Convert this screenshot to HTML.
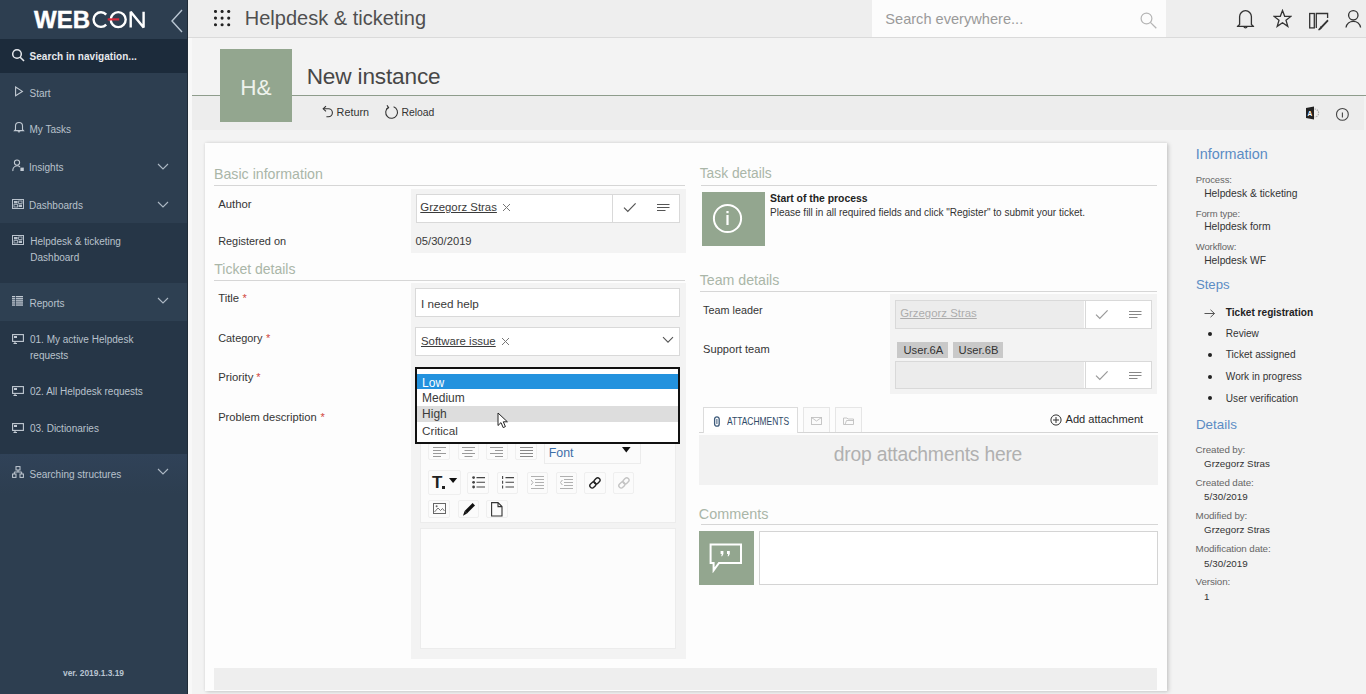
<!DOCTYPE html>
<html><head><meta charset="utf-8"><title>WEBCON</title>
<style>
html,body{margin:0;padding:0;width:1366px;height:694px;overflow:hidden;background:#f3f3f3;}
body{position:relative;font-family:"Liberation Sans",sans-serif;}
.t{position:absolute;white-space:nowrap;line-height:1;}
.r{position:absolute;box-sizing:border-box;}
.u{text-decoration:underline;}
</style></head><body>
<div class="r" style="left:0px;top:0px;width:188px;height:694px;background:#2d3e50;"></div>
<svg class="r" style="left:30px;top:6px;" width="120" height="28" viewBox="0 0 120 28">
<text x="4" y="21.6" font-family="Liberation Sans" font-weight="700" font-size="23" fill="#fff" stroke="#fff" stroke-width="0.4" textLength="56" lengthAdjust="spacingAndGlyphs">WEB</text>
<path d="M76.2 8.6 A7.3 7.3 0 1 0 76.2 18.6" fill="none" stroke="#fff" stroke-width="2.4"/>
<circle cx="88.2" cy="13.6" r="7.5" fill="none" stroke="#fff" stroke-width="2.4"/>
<line x1="77.7" y1="13.4" x2="89.2" y2="13.4" stroke="#d8283a" stroke-width="2.2"/>
<path d="M100.7 21.5 V5.7 L113.6 21.5 V5.7" fill="none" stroke="#fff" stroke-width="2.4" stroke-linejoin="bevel"/>
</svg>
<svg class="r" style="left:168px;top:8px;" width="18" height="26" viewBox="0 0 18 26"><path d="M14 2 L4 13 L14 24" fill="none" stroke="#b9c6d3" stroke-width="1.4"/></svg>
<div class="r" style="left:0px;top:39px;width:188px;height:34px;background:#1c2b3b;"></div>
<svg class="r" style="left:11px;top:48px;" width="16" height="15" viewBox="0 0 16 15"><circle cx="6" cy="6" r="4.3" fill="none" stroke="#e6e9ee" stroke-width="1.5"/><line x1="9.2" y1="9.2" x2="13" y2="13" stroke="#e6e9ee" stroke-width="1.6"/></svg>
<div class="t " style="left:29.5px;top:52.4px;font-size:10px;color:#e6e9ed;font-weight:700;letter-spacing:0.05px;">Search in navigation...</div>
<div class="t " style="left:29.5px;top:89.1px;font-size:10px;color:#b9c2cc;">Start</div>
<svg class="r" style="left:14px;top:86px;" width="10" height="12" viewBox="0 0 10 12"><path d="M1.6 1 L8.4 5.4 L1.6 9.8 Z" fill="none" stroke="#c3cbd4" stroke-width="1.1"/></svg>
<div class="t " style="left:29.5px;top:125.1px;font-size:10px;color:#b9c2cc;">My Tasks</div>
<svg class="r" style="left:13px;top:121px;" width="12" height="13" viewBox="0 0 12 13"><path d="M2.5 8.5 V5 A3.5 3.5 0 0 1 9.5 5 V8.5 L10.5 9.6 H1.5 Z M5 10.5 A1.2 1.2 0 0 0 7 10.5" fill="none" stroke="#c3cbd4" stroke-width="1.1"/></svg>
<div class="t " style="left:29.0px;top:163.1px;font-size:10px;color:#b9c2cc;">Insights</div>
<svg class="r" style="left:12px;top:159px;" width="14" height="14" viewBox="0 0 14 14"><circle cx="5" cy="3.6" r="2.6" fill="none" stroke="#c3cbd4" stroke-width="1.1"/><path d="M1 12 A4.2 4.2 0 0 1 8 8" fill="none" stroke="#c3cbd4" stroke-width="1.1"/><rect x="8.4" y="8.6" width="3.4" height="3.4" fill="#c3cbd4"/></svg>
<div class="t " style="left:29.0px;top:201.1px;font-size:10px;color:#b9c2cc;">Dashboards</div>
<svg class="r" style="left:12px;top:199px;" width="12" height="10" viewBox="0 0 12 10"><rect x="0.5" y="0.5" width="11" height="9" fill="none" stroke="#b9c2cc" stroke-width="1"/><rect x="2" y="2" width="3.6" height="2.4" fill="#b9c2cc"/><rect x="6.6" y="2" width="3.4" height="2.4" fill="none" stroke="#b9c2cc" stroke-width="0.8"/><rect x="2" y="5.6" width="3.6" height="2.4" fill="none" stroke="#b9c2cc" stroke-width="0.8"/><rect x="6.6" y="5.6" width="3.4" height="2.4" fill="#b9c2cc"/></svg>
<div class="r" style="left:0px;top:223px;width:188px;height:60px;background:#263647;"></div>
<div class="t " style="left:30.3px;top:236.5px;font-size:10px;color:#b9c2cc;">Helpdesk &amp; ticketing</div>
<div class="t " style="left:30.3px;top:252.8px;font-size:10px;color:#b9c2cc;">Dashboard</div>
<svg class="r" style="left:12px;top:235px;" width="12" height="10" viewBox="0 0 12 10"><rect x="0.5" y="0.5" width="11" height="9" fill="none" stroke="#b9c2cc" stroke-width="1"/><rect x="2" y="2" width="3.6" height="2.4" fill="#b9c2cc"/><rect x="6.6" y="2" width="3.4" height="2.4" fill="none" stroke="#b9c2cc" stroke-width="0.8"/><rect x="2" y="5.6" width="3.6" height="2.4" fill="none" stroke="#b9c2cc" stroke-width="0.8"/><rect x="6.6" y="5.6" width="3.4" height="2.4" fill="#b9c2cc"/></svg>
<div class="r" style="left:0px;top:283px;width:188px;height:38px;background:#2e4052;"></div>
<div class="t " style="left:29.5px;top:298.7px;font-size:10px;color:#b9c2cc;">Reports</div>
<svg class="r" style="left:12px;top:296px;" width="12" height="11" viewBox="0 0 12 11"><rect x="0" y="0.0" width="11" height="1.3" fill="#c3cbd4"/><rect x="0" y="2.1" width="11" height="1.3" fill="#c3cbd4"/><rect x="0" y="4.2" width="11" height="1.3" fill="#c3cbd4"/><rect x="0" y="6.3" width="11" height="1.3" fill="#c3cbd4"/><rect x="0" y="8.4" width="11" height="1.3" fill="#c3cbd4"/><line x1="3.5" y1="0" x2="3.5" y2="10" stroke="#2f4155" stroke-width="0.8"/></svg>
<div class="r" style="left:0px;top:321px;width:188px;height:133px;background:#263647;"></div>
<div class="t " style="left:30.0px;top:334.9px;font-size:10px;color:#b9c2cc;">01. My active Helpdesk</div>
<div class="t " style="left:30.0px;top:351.0px;font-size:10px;color:#b9c2cc;">requests</div>
<svg class="r" style="left:12px;top:334px;" width="12" height="10" viewBox="0 0 12 10"><rect x="0.6" y="0.6" width="10.8" height="6.8" fill="none" stroke="#c3cbd4" stroke-width="1.1"/><path d="M3 7.4 V9.6 M1.5 9.6 H5" stroke="#c3cbd4" stroke-width="1.1"/><rect x="2" y="2" width="3" height="2" fill="#c3cbd4"/></svg>
<div class="t " style="left:30.0px;top:386.8px;font-size:10px;color:#b9c2cc;">02. All Helpdesk requests</div>
<svg class="r" style="left:12px;top:386px;" width="12" height="10" viewBox="0 0 12 10"><rect x="0.6" y="0.6" width="10.8" height="6.8" fill="none" stroke="#c3cbd4" stroke-width="1.1"/><path d="M3 7.4 V9.6 M1.5 9.6 H5" stroke="#c3cbd4" stroke-width="1.1"/><rect x="2" y="2" width="3" height="2" fill="#c3cbd4"/></svg>
<div class="t " style="left:30.0px;top:423.7px;font-size:10px;color:#b9c2cc;">03. Dictionaries</div>
<svg class="r" style="left:12px;top:423px;" width="12" height="10" viewBox="0 0 12 10"><rect x="0.6" y="0.6" width="10.8" height="6.8" fill="none" stroke="#c3cbd4" stroke-width="1.1"/><path d="M3 7.4 V9.6 M1.5 9.6 H5" stroke="#c3cbd4" stroke-width="1.1"/><rect x="2" y="2" width="3" height="2" fill="#c3cbd4"/></svg>
<div class="r" style="left:0px;top:454px;width:188px;height:40px;background:linear-gradient(#304258,#2d3e50);"></div>
<div class="t " style="left:29.5px;top:469.5px;font-size:10px;color:#b9c2cc;">Searching structures</div>
<svg class="r" style="left:12px;top:466px;" width="12" height="12" viewBox="0 0 12 12"><rect x="4" y="0.6" width="4" height="3.4" fill="none" stroke="#c3cbd4" stroke-width="1"/><rect x="0.6" y="8" width="3.4" height="3.4" fill="none" stroke="#c3cbd4" stroke-width="1"/><rect x="8" y="8" width="3.4" height="3.4" fill="none" stroke="#c3cbd4" stroke-width="1"/><path d="M6 4 V6 M2.3 8 V6 H9.7 V8" fill="none" stroke="#c3cbd4" stroke-width="1"/></svg>
<svg class="r" style="left:157px;top:163px;" width="12" height="8" viewBox="0 0 12 8"><path d="M1 1 L6 6 L11 1" fill="none" stroke="#aeb9c5" stroke-width="1.1"/></svg>
<svg class="r" style="left:157px;top:201px;" width="12" height="8" viewBox="0 0 12 8"><path d="M1 1 L6 6 L11 1" fill="none" stroke="#aeb9c5" stroke-width="1.1"/></svg>
<svg class="r" style="left:157px;top:297px;" width="12" height="8" viewBox="0 0 12 8"><path d="M1 1 L6 6 L11 1" fill="none" stroke="#aeb9c5" stroke-width="1.1"/></svg>
<svg class="r" style="left:157px;top:468px;" width="12" height="8" viewBox="0 0 12 8"><path d="M1 1 L6 6 L11 1" fill="none" stroke="#aeb9c5" stroke-width="1.1"/></svg>
<div class="r" style="left:186.5px;top:0px;width:1.5px;height:694px;background:#1f2b37;"></div>
<div class="t " style="left:63.0px;top:668.8px;font-size:8.4px;color:#b9c4d0;font-weight:700;">ver. 2019.1.3.19</div>
<div class="r" style="left:188px;top:0px;width:1178px;height:37px;background:#eeeeee;"></div>
<div class="r" style="left:188px;top:37px;width:1178px;height:1px;background:#dadada;"></div>
<svg class="r" style="left:214px;top:10px;" width="17" height="17" viewBox="0 0 17 17"><circle cx="1.5" cy="1.5" r="1.55" fill="#222"/><circle cx="1.5" cy="8.1" r="1.55" fill="#222"/><circle cx="1.5" cy="14.7" r="1.55" fill="#222"/><circle cx="8.1" cy="1.5" r="1.55" fill="#222"/><circle cx="8.1" cy="8.1" r="1.55" fill="#222"/><circle cx="8.1" cy="14.7" r="1.55" fill="#222"/><circle cx="14.7" cy="1.5" r="1.55" fill="#222"/><circle cx="14.7" cy="8.1" r="1.55" fill="#222"/><circle cx="14.7" cy="14.7" r="1.55" fill="#222"/></svg>
<div class="t " style="left:244.8px;top:8.4px;font-size:20px;color:#505050;">Helpdesk &amp; ticketing</div>
<div class="r" style="left:872px;top:0px;width:294px;height:37px;background:#fcfcfc;"></div>
<div class="t " style="left:885.3px;top:12.2px;font-size:14.6px;color:#9a9a9a;">Search everywhere...</div>
<svg class="r" style="left:1140px;top:12px;" width="18" height="17" viewBox="0 0 18 17"><circle cx="6.5" cy="6.5" r="5.4" fill="none" stroke="#b5b5b5" stroke-width="1.2"/><line x1="10.4" y1="10.4" x2="16.3" y2="16.2" stroke="#b5b5b5" stroke-width="1.3"/></svg>
<svg class="r" style="left:1236px;top:8px;" width="19" height="21" viewBox="0 0 19 21"><path d="M3.6 16.6 V8.6 A5.9 5.9 0 0 1 15.4 8.6 V16.6 L17.6 18.4 H1.4 Z" fill="none" stroke="#333" stroke-width="1.3" stroke-linejoin="round"/><path d="M7.8 18.6 A1.8 1.8 0 0 0 11.2 18.6" fill="none" stroke="#333" stroke-width="1.2"/></svg>
<svg class="r" style="left:1273px;top:9px;" width="19" height="20" viewBox="0 0 19 20"><path d="M9.5 1.5 L11.7 7.3 L17.9 7.4 L13 11.2 L14.8 17.4 L9.5 13.8 L4.2 17.4 L6 11.2 L1.1 7.4 L7.3 7.3 Z" fill="none" stroke="#333" stroke-width="1.3" stroke-linejoin="miter"/></svg>
<svg class="r" style="left:1308px;top:12px;" width="22" height="19" viewBox="0 0 22 19"><rect x="1.7" y="1.5" width="4.6" height="14.4" fill="none" stroke="#333" stroke-width="1.3"/><path d="M8.3 15.9 V1.5 H19.6 V6" fill="none" stroke="#333" stroke-width="1.3"/><path d="M19.4 8.4 L11.6 16.6 L10.6 18 L12 17.2 L19.8 9 Z" fill="none" stroke="#333" stroke-width="1.2"/><line x1="12.2" y1="14.6" x2="13.8" y2="16.2" stroke="#333" stroke-width="1"/></svg>
<svg class="r" style="left:1345px;top:9px;" width="18" height="20" viewBox="0 0 18 20"><circle cx="8.3" cy="6.3" r="4.7" fill="none" stroke="#333" stroke-width="1.3"/><path d="M1 18.5 A7.4 7.4 0 0 1 15.6 18.5" fill="none" stroke="#333" stroke-width="1.3"/></svg>
<div class="r" style="left:192px;top:38px;width:1172px;height:58px;background:#f3f3f3;"></div>
<div class="r" style="left:192px;top:96px;width:1172px;height:34px;background:#ededed;"></div>
<div class="r" style="left:192px;top:94.6px;width:1174px;height:1.8px;background:#8e9c8c;"></div>
<div class="r" style="left:220px;top:49px;width:72px;height:73px;background:#93a68f;"></div>
<div class="t " style="left:240.2px;top:76.7px;font-size:22.6px;color:#eef2ec;">H&amp;</div>
<div class="t " style="left:306.7px;top:66.3px;font-size:22.6px;color:#474747;letter-spacing:-0.15px;">New instance</div>
<svg class="r" style="left:321px;top:105px;" width="13" height="14" viewBox="0 0 13 14"><path d="M2.6 3.8 H7.4 A4 4 0 0 1 7.4 11.8 H5.4" fill="none" stroke="#333" stroke-width="1.1"/><path d="M5 1.2 L2.2 3.8 L5 6.4" fill="none" stroke="#333" stroke-width="1.1"/></svg>
<div class="t " style="left:336.6px;top:107.4px;font-size:10.8px;color:#333;letter-spacing:0.0px;">Return</div>
<svg class="r" style="left:384px;top:104px;" width="15" height="16" viewBox="0 0 15 16"><path d="M4.4 3.4 A5.9 5.9 0 1 0 9.6 2.8" fill="none" stroke="#333" stroke-width="1.1"/><path d="M3 1.2 L4.6 3.6 L2.4 5.2" fill="none" stroke="#333" stroke-width="1.1"/></svg>
<div class="t " style="left:401.4px;top:107.7px;font-size:10.4px;color:#333;">Reload</div>
<svg class="r" style="left:1305px;top:106px;" width="16" height="14" viewBox="0 0 16 14"><path d="M1 2 L9 0.6 V13.4 L1 12 Z" fill="#222"/><text x="2.6" y="9.6" font-family="Liberation Sans" font-weight="700" font-size="6.5" fill="#fff">A</text><path d="M9.6 3 A4 4 0 0 1 9.6 11" fill="none" stroke="#aaa" stroke-width="1.2" stroke-dasharray="1.4 0.9"/></svg>
<svg class="r" style="left:1335px;top:107px;" width="15" height="15" viewBox="0 0 15 15"><circle cx="7.4" cy="7.4" r="5.9" fill="none" stroke="#444" stroke-width="1.1"/><line x1="7.4" y1="5.6" x2="7.4" y2="10.6" stroke="#444" stroke-width="1.1"/></svg>
<div class="r" style="left:188px;top:38px;width:4px;height:656px;background:#f8f8f8;"></div>
<div class="r" style="left:204.5px;top:143.4px;width:962px;height:547.6px;background:#fdfdfd;box-shadow:0 0 3px rgba(0,0,0,0.10),2px 1px 4px rgba(0,0,0,0.14);"></div>
<div class="t " style="left:214.0px;top:166.8px;font-size:14.2px;color:#aab6a8;">Basic information</div>
<div class="r" style="left:214px;top:185px;width:471px;height:1px;background:#d6d6d6;"></div>
<div class="t " style="left:218.2px;top:198.8px;font-size:11.3px;color:#353535;">Author</div>
<div class="t " style="left:218.2px;top:235.8px;font-size:10.9px;color:#353535;">Registered on</div>
<div class="r" style="left:410.5px;top:189px;width:275px;height:63.5px;background:#f3f3f3;"></div>
<div class="r" style="left:415.5px;top:194px;width:264.5px;height:28.6px;background:#fff;border:1px solid #d9d9d9;"></div>
<div class="r" style="left:612px;top:194px;width:1px;height:28.6px;background:#d9d9d9;"></div>
<div class="t u" style="left:420.3px;top:202.3px;font-size:11.4px;color:#3a3a3a;">Grzegorz Stras</div>
<svg class="r" style="left:501.5px;top:203px;" width="9" height="9" viewBox="0 0 9 9"><path d="M1 1 L8 8 M8 1 L1 8" stroke="#777" stroke-width="1"/></svg>
<svg class="r" style="left:623px;top:202px;" width="14" height="11" viewBox="0 0 14 11"><path d="M1 5.6 L4.8 9.4 L12.6 1.4" fill="none" stroke="#555" stroke-width="1.2"/></svg>
<svg class="r" style="left:657px;top:203px;" width="13" height="9" viewBox="0 0 13 9"><path d="M0 1.5 H12.5 M0 4.5 H12.5 M0 7.5 H8.5" fill="none" stroke="#555" stroke-width="1.1"/></svg>
<div class="t " style="left:415.6px;top:235.5px;font-size:11.2px;color:#3a3a3a;">05/30/2019</div>
<div class="t " style="left:214.3px;top:262.3px;font-size:14px;color:#aab6a8;">Ticket details</div>
<div class="r" style="left:214px;top:279.5px;width:471px;height:1px;background:#d6d6d6;"></div>
<div class="t " style="left:218.2px;top:292.9px;font-size:11.3px;color:#353535;">Title</div>
<div class="t " style="left:218.2px;top:333.3px;font-size:10.9px;color:#353535;">Category</div>
<div class="t " style="left:218.2px;top:372.1px;font-size:11.3px;color:#353535;">Priority</div>
<div class="t " style="left:218.2px;top:411.5px;font-size:11.15px;color:#353535;">Problem description</div>
<div class="t " style="left:242.6px;top:293.2px;font-size:11px;color:#d0453e;">*</div>
<div class="t " style="left:266.0px;top:333.2px;font-size:11px;color:#d0453e;">*</div>
<div class="t " style="left:256.2px;top:372.4px;font-size:11px;color:#d0453e;">*</div>
<div class="t " style="left:320.4px;top:411.6px;font-size:11px;color:#d0453e;">*</div>
<div class="r" style="left:410.5px;top:283px;width:275px;height:376px;background:#f3f3f3;"></div>
<div class="r" style="left:415.3px;top:288px;width:264.5px;height:28.7px;background:#fff;border:1px solid #d9d9d9;"></div>
<div class="t " style="left:421.0px;top:297.8px;font-size:11.7px;color:#3a3a3a;">I need help</div>
<div class="r" style="left:415.3px;top:327.3px;width:264.5px;height:28.6px;background:#fff;border:1px solid #d9d9d9;"></div>
<div class="t u" style="left:421.0px;top:335.8px;font-size:11.4px;color:#3a3a3a;">Software issue</div>
<svg class="r" style="left:500.5px;top:337px;" width="9" height="9" viewBox="0 0 9 9"><path d="M1 1 L8 8 M8 1 L1 8" stroke="#777" stroke-width="1"/></svg>
<svg class="r" style="left:662px;top:336px;" width="12" height="8" viewBox="0 0 12 8"><path d="M1 1.2 L6 6.2 L11 1.2" fill="none" stroke="#555" stroke-width="1.1"/></svg>
<div class="r" style="left:419.6px;top:443px;width:256.2px;height:80.2px;background:#fbfbfb;border:1px solid #ececec;"></div>
<div class="r" style="left:419.6px;top:528.4px;width:256.2px;height:120.6px;background:#fcfcfc;border:1px solid #ececec;"></div>
<div class="r" style="left:428.4px;top:443px;width:21.5px;height:17.3px;background:#fbfbfb;border:1px solid #efefef;border-radius:2px;"></div>
<svg class="r" style="left:432.59999999999997px;top:447px;" width="13" height="10" viewBox="0 0 13 10"><path d="M0 0.5 H13 M0 3.5 H8 M0 6.5 H13 M0 9.5 H8" stroke="#999" stroke-width="1"/></svg>
<div class="r" style="left:457.5px;top:443px;width:21.5px;height:17.3px;background:#fbfbfb;border:1px solid #efefef;border-radius:2px;"></div>
<svg class="r" style="left:461.7px;top:447px;" width="13" height="10" viewBox="0 0 13 10"><path d="M0 0.5 H13 M2.5 3.5 H10.5 M0 6.5 H13 M2.5 9.5 H10.5" stroke="#999" stroke-width="1"/></svg>
<div class="r" style="left:486px;top:443px;width:21.5px;height:17.3px;background:#fbfbfb;border:1px solid #efefef;border-radius:2px;"></div>
<svg class="r" style="left:490.2px;top:447px;" width="13" height="10" viewBox="0 0 13 10"><path d="M0 0.5 H13 M5 3.5 H13 M0 6.5 H13 M5 9.5 H13" stroke="#999" stroke-width="1"/></svg>
<div class="r" style="left:515.3px;top:443px;width:21.5px;height:17.3px;background:#fbfbfb;border:1px solid #efefef;border-radius:2px;"></div>
<svg class="r" style="left:519.5px;top:447px;" width="13" height="10" viewBox="0 0 13 10"><path d="M0 0.5 H13 M0 3.5 H13 M0 6.5 H13 M0 9.5 H13" stroke="#888" stroke-width="1"/></svg>
<div class="r" style="left:543.8px;top:443px;width:97.2px;height:21.2px;background:#fbfbfb;border:1px solid #ececec;"></div>
<div class="t " style="left:548.7px;top:446.5px;font-size:12.4px;color:#3e6fa8;">Font</div>
<svg class="r" style="left:622px;top:447px;" width="9" height="6" viewBox="0 0 9 6"><path d="M0 0 H8.6 L4.3 5.4 Z" fill="#111"/></svg>
<div class="r" style="left:427.7px;top:470px;width:33.1px;height:25px;background:#fbfbfb;border:1px solid #efefef;border-radius:2px;"></div>
<div class="t " style="left:432.0px;top:474.2px;font-size:17px;color:#222;font-weight:700;">T</div>
<div class="r" style="left:442.2px;top:485.6px;width:2.4px;height:3px;background:#222;"></div>
<svg class="r" style="left:449px;top:478px;" width="9" height="6" viewBox="0 0 9 6"><path d="M0 0 H8.2 L4.1 5 Z" fill="#111"/></svg>
<div class="r" style="left:467.3px;top:472px;width:21.7px;height:22px;background:#fbfbfb;border:1px solid #efefef;border-radius:2px;"></div>
<div class="r" style="left:496.8px;top:472px;width:21.7px;height:22px;background:#fbfbfb;border:1px solid #efefef;border-radius:2px;"></div>
<div class="r" style="left:526.6px;top:472px;width:21.7px;height:22px;background:#fbfbfb;border:1px solid #efefef;border-radius:2px;"></div>
<div class="r" style="left:555.8px;top:472px;width:21.7px;height:22px;background:#fbfbfb;border:1px solid #efefef;border-radius:2px;"></div>
<div class="r" style="left:584.4px;top:472px;width:21.7px;height:22px;background:#fbfbfb;border:1px solid #efefef;border-radius:2px;"></div>
<div class="r" style="left:612.6px;top:472px;width:21.7px;height:22px;background:#fbfbfb;border:1px solid #efefef;border-radius:2px;"></div>
<svg class="r" style="left:471.7px;top:476px;" width="14" height="13" viewBox="0 0 14 13"><circle cx="1.6" cy="1.6" r="1.4" fill="#444"/><circle cx="1.6" cy="6.3" r="1.4" fill="#444"/><circle cx="1.6" cy="11" r="1.4" fill="#444"/><path d="M4.5 1.6 H13 M4.5 6.3 H13 M4.5 11 H13" stroke="#444" stroke-width="1.1"/></svg>
<svg class="r" style="left:501.2px;top:476px;" width="14" height="13" viewBox="0 0 14 13"><path d="M1.6 0 V3 M1.6 4.8 V7.8 M1.6 9.6 V12.6" stroke="#444" stroke-width="1.1"/><path d="M4.5 1.6 H13 M4.5 6.3 H13 M4.5 11 H13" stroke="#444" stroke-width="1.1"/></svg>
<svg class="r" style="left:531.0px;top:476px;" width="13" height="13" viewBox="0 0 13 13"><path d="M0 0.5 H13 M4 3.5 H13 M4 6.5 H13 M4 9.5 H13 M0 12.5 H13" stroke="#b0b0b0" stroke-width="1"/><path d="M0 4 L2 6.5 L0 9" fill="none" stroke="#b0b0b0" stroke-width="1"/></svg>
<svg class="r" style="left:560.1999999999999px;top:476px;" width="13" height="13" viewBox="0 0 13 13"><path d="M0 0.5 H13 M4 3.5 H13 M4 6.5 H13 M4 9.5 H13 M0 12.5 H13" stroke="#b0b0b0" stroke-width="1"/><path d="M2.4 4 L0.4 6.5 L2.4 9" fill="none" stroke="#b0b0b0" stroke-width="1"/></svg>
<svg class="r" style="left:588.4px;top:476px;" width="14" height="14" viewBox="0 0 14 14"><g transform="rotate(-45 7 7)"><rect x="0.8" y="4.6" width="6.6" height="4.6" rx="2.3" fill="none" stroke="#222" stroke-width="1.4"/><rect x="6.6" y="4.6" width="6.6" height="4.6" rx="2.3" fill="none" stroke="#222" stroke-width="1.4"/></g></svg>
<svg class="r" style="left:616.6px;top:476px;" width="14" height="14" viewBox="0 0 14 14"><g transform="rotate(-45 7 7)"><rect x="0.8" y="4.6" width="6.6" height="4.6" rx="2.3" fill="none" stroke="#c4c4c4" stroke-width="1.4"/><rect x="6.6" y="4.6" width="6.6" height="4.6" rx="2.3" fill="none" stroke="#c4c4c4" stroke-width="1.4"/></g></svg>
<div class="r" style="left:428.4px;top:500px;width:21.7px;height:18px;background:#fbfbfb;border:1px solid #efefef;border-radius:2px;"></div>
<div class="r" style="left:457.5px;top:500px;width:21.7px;height:18px;background:#fbfbfb;border:1px solid #efefef;border-radius:2px;"></div>
<div class="r" style="left:486px;top:500px;width:21.7px;height:18px;background:#fbfbfb;border:1px solid #efefef;border-radius:2px;"></div>
<svg class="r" style="left:432.5px;top:503px;" width="13" height="11" viewBox="0 0 13 11"><rect x="0.5" y="0.5" width="12" height="10" fill="none" stroke="#666" stroke-width="1"/><path d="M1.5 9 L5 5 L7.5 7.5 L9.5 5.5 L11.5 8" fill="none" stroke="#666" stroke-width="0.9"/><circle cx="3.6" cy="3.2" r="1" fill="#666"/></svg>
<svg class="r" style="left:461.5px;top:502px;" width="14" height="15" viewBox="0 0 14 15"><path d="M10.6 1 L13 3.4 L5 11.4 L2.6 9 Z" fill="#111"/><path d="M2.6 9 L1 13.8 L5 11.4" fill="#111"/></svg>
<svg class="r" style="left:491px;top:502px;" width="12" height="15" viewBox="0 0 12 15"><path d="M0.6 0.6 H7 L11 4.6 V14 H0.6 Z M7 0.6 V4.6 H11" fill="none" stroke="#333" stroke-width="1.1"/></svg>
<div class="r" style="left:415.3px;top:367px;width:264.5px;height:76.6px;background:#fff;border:2px solid #111;"></div>
<div class="r" style="left:417.3px;top:374.3px;width:260.5px;height:15.2px;background:#2392de;"></div>
<div class="r" style="left:417.3px;top:406.1px;width:260.5px;height:15.5px;background:#dddddd;"></div>
<div class="t " style="left:422.1px;top:376.8px;font-size:12px;color:#fff;">Low</div>
<div class="t " style="left:422.1px;top:392.3px;font-size:12px;color:#3a3a3a;">Medium</div>
<div class="t " style="left:422.1px;top:408.2px;font-size:12px;color:#3a3a3a;">High</div>
<div class="t " style="left:422.1px;top:424.9px;font-size:11.7px;color:#3a3a3a;">Critical</div>
<svg class="r" style="left:497px;top:412px;" width="13" height="18" viewBox="0 0 13 18"><path d="M1 1 L1 13.5 L4 10.6 L6.2 15.6 L8.4 14.6 L6.3 9.8 L10.4 9.8 Z" fill="#fff" stroke="#222" stroke-width="1" stroke-linejoin="round"/></svg>
<div class="r" style="left:213.8px;top:668px;width:943.5px;height:21.5px;background:#eeeeee;"></div>
<div class="t " style="left:699.7px;top:167.0px;font-size:13.8px;color:#aab6a8;">Task details</div>
<div class="r" style="left:701px;top:185px;width:456px;height:1px;background:#d6d6d6;"></div>
<div class="r" style="left:701.8px;top:192.2px;width:63px;height:54.2px;background:#93a68f;"></div>
<svg class="r" style="left:712px;top:203px;" width="31" height="31" viewBox="0 0 31 31"><circle cx="15.5" cy="15.5" r="13.6" fill="none" stroke="#fff" stroke-width="2"/><rect x="14.4" y="12" width="2.2" height="10" fill="#fff"/><rect x="14.4" y="8" width="2.2" height="2.2" fill="#fff"/></svg>
<div class="t " style="left:770.0px;top:194.0px;font-size:10.4px;color:#222;font-weight:700;">Start of the process</div>
<div class="t " style="left:770.0px;top:208.3px;font-size:10px;color:#333;">Please fill in all required fields and click "Register" to submit your ticket.</div>
<div class="t " style="left:699.7px;top:273.2px;font-size:14.2px;color:#aab6a8;">Team details</div>
<div class="r" style="left:700px;top:291px;width:457px;height:1px;background:#d6d6d6;"></div>
<div class="t " style="left:703.1px;top:304.9px;font-size:10.8px;color:#353535;">Team leader</div>
<div class="t " style="left:703.1px;top:344.4px;font-size:11.1px;color:#353535;">Support team</div>
<div class="r" style="left:889.6px;top:294.2px;width:267.4px;height:99.8px;background:#f3f3f3;"></div>
<div class="r" style="left:894.9px;top:300px;width:257.5px;height:28.6px;background:#fff;border:1px solid #d9d9d9;"></div>
<div class="r" style="left:895.9px;top:301px;width:188.6px;height:26.6px;background:#ececec;"></div>
<div class="r" style="left:1084.5px;top:300px;width:1px;height:28.6px;background:#d9d9d9;"></div>
<div class="t u" style="left:900.2px;top:308.3px;font-size:11.4px;color:#acacac;">Grzegorz Stras</div>
<svg class="r" style="left:1095px;top:309px;" width="14" height="11" viewBox="0 0 14 11"><path d="M1 5.6 L4.8 9.4 L12.6 1.4" fill="none" stroke="#999" stroke-width="1.2"/></svg>
<svg class="r" style="left:1128.8px;top:310px;" width="13" height="9" viewBox="0 0 13 9"><path d="M0 1.5 H12.5 M0 4.5 H12.5 M0 7.5 H8.5" fill="none" stroke="#888" stroke-width="1.1"/></svg>
<div class="r" style="left:897.4px;top:341.6px;width:51px;height:16.4px;background:#c9c9c9;"></div>
<div class="t " style="left:903.5px;top:344.5px;font-size:11.2px;color:#333;">User.6A</div>
<div class="r" style="left:952.8px;top:341.6px;width:50.3px;height:16.4px;background:#c9c9c9;"></div>
<div class="t " style="left:958.6px;top:344.5px;font-size:11.2px;color:#333;">User.6B</div>
<div class="r" style="left:894.9px;top:360.5px;width:257.5px;height:28.9px;background:#fff;border:1px solid #d9d9d9;"></div>
<div class="r" style="left:895.9px;top:361.5px;width:188.6px;height:26.9px;background:#ececec;"></div>
<div class="r" style="left:1084.5px;top:360.5px;width:1px;height:28.9px;background:#d9d9d9;"></div>
<svg class="r" style="left:1095px;top:370px;" width="14" height="11" viewBox="0 0 14 11"><path d="M1 5.6 L4.8 9.4 L12.6 1.4" fill="none" stroke="#999" stroke-width="1.2"/></svg>
<svg class="r" style="left:1128.8px;top:371px;" width="13" height="9" viewBox="0 0 13 9"><path d="M0 1.5 H12.5 M0 4.5 H12.5 M0 7.5 H8.5" fill="none" stroke="#888" stroke-width="1.1"/></svg>
<div class="r" style="left:699px;top:432px;width:458.6px;height:1px;background:#d5d5d5;"></div>
<div class="r" style="left:703.4px;top:407.4px;width:94.4px;height:25.6px;background:#fff;border:1px solid #dcdcdc;border-bottom:none;"></div>
<div class="r" style="left:802.5px;top:407.4px;width:27.8px;height:25.1px;background:#fbfbfb;border:1px solid #e6e6e6;border-bottom:none;"></div>
<div class="r" style="left:835.2px;top:407.4px;width:27.1px;height:25.1px;background:#fbfbfb;border:1px solid #e6e6e6;border-bottom:none;"></div>
<svg class="r" style="left:713px;top:416px;" width="8" height="11" viewBox="0 0 8 11"><rect x="1.6" y="0.8" width="4.6" height="9.4" rx="2.3" fill="none" stroke="#3d5a7a" stroke-width="1.3"/><line x1="3.9" y1="3" x2="3.9" y2="8" stroke="#3d5a7a" stroke-width="1"/></svg>
<div class="t " style="left:726.6px;top:417.3px;font-size:10.2px;color:#2f4a68;transform:scaleX(0.83);transform-origin:0 0;">ATTACHMENTS</div>
<svg class="r" style="left:811px;top:417px;" width="11" height="8" viewBox="0 0 11 8"><rect x="0.5" y="0.5" width="10" height="7" fill="none" stroke="#c0c0c0" stroke-width="0.9"/><path d="M0.5 0.5 L5.5 4 L10.5 0.5" fill="none" stroke="#c0c0c0" stroke-width="0.9"/></svg>
<svg class="r" style="left:843px;top:416px;" width="11" height="9" viewBox="0 0 11 9"><path d="M0.5 2 H4 L5 3 H10.5 V8.5 H0.5 Z M2 8.5 L3.5 4.5 H10.5" fill="none" stroke="#c0c0c0" stroke-width="0.9"/></svg>
<svg class="r" style="left:1050px;top:414px;" width="12" height="12" viewBox="0 0 12 12"><circle cx="6" cy="6" r="5.1" fill="none" stroke="#333" stroke-width="1"/><path d="M6 3 V9 M3 6 H9" stroke="#333" stroke-width="1"/></svg>
<div class="t " style="left:1065.5px;top:413.5px;font-size:11.1px;color:#2a2a2a;">Add attachment</div>
<div class="r" style="left:699px;top:435.1px;width:458.6px;height:49.5px;background:#f2f2f2;"></div>
<div class="t " style="left:833.8px;top:445.1px;font-size:19.3px;color:#b0b0b0;letter-spacing:-0.22px;">drop attachments here</div>
<div class="t " style="left:698.8px;top:507.1px;font-size:14.4px;color:#aab6a8;">Comments</div>
<div class="r" style="left:700.6px;top:524.2px;width:457px;height:1.2px;background:#d6d6d6;"></div>
<div class="r" style="left:699.2px;top:530.7px;width:54.5px;height:54.3px;background:#93a68f;"></div>
<svg class="r" style="left:709px;top:543px;" width="34" height="30" viewBox="0 0 34 30"><path d="M1.6 1.6 H32 V20 H10 L4.6 27.4 V20 H1.6 Z" fill="none" stroke="#fff" stroke-width="2"/><path d="M11.6 8 H14.4 V11 L13.2 13.2 H12.2 L12.8 11 H11.6 Z M18 8 H20.8 V11 L19.6 13.2 H18.6 L19.2 11 H18 Z" fill="#fff"/></svg>
<div class="r" style="left:759px;top:530.7px;width:399px;height:54.3px;background:#fff;border:1px solid #d4d4d4;"></div>
<div class="t " style="left:1195.7px;top:147.4px;font-size:14.4px;color:#5b8cc4;">Information</div>
<div class="t " style="left:1195.7px;top:175.4px;font-size:9.5px;color:#666;letter-spacing:-0.1px;">Process:</div>
<div class="t " style="left:1204.2px;top:189.0px;font-size:10.3px;color:#333;">Helpdesk &amp; ticketing</div>
<div class="t " style="left:1195.7px;top:208.7px;font-size:9.5px;color:#666;letter-spacing:-0.1px;">Form type:</div>
<div class="t " style="left:1204.2px;top:222.3px;font-size:10.3px;color:#333;">Helpdesk form</div>
<div class="t " style="left:1195.7px;top:242.0px;font-size:9.5px;color:#666;letter-spacing:-0.1px;">Workflow:</div>
<div class="t " style="left:1204.2px;top:255.6px;font-size:10.3px;color:#333;">Helpdesk WF</div>
<div class="t " style="left:1195.9px;top:278.4px;font-size:13.2px;color:#5b8cc4;">Steps</div>
<svg class="r" style="left:1204px;top:309px;" width="12" height="9" viewBox="0 0 12 9"><path d="M0.5 4.5 H10.5 M6.5 0.8 L10.5 4.5 L6.5 8.2" fill="none" stroke="#555" stroke-width="1"/></svg>
<div class="t " style="left:1225.8px;top:308.0px;font-size:10.1px;color:#222;font-weight:700;">Ticket registration</div>
<div class="r" style="left:1208.2px;top:331.9px;width:4px;height:4px;background:#222;border-radius:50%;"></div>
<div class="t " style="left:1225.8px;top:329.3px;font-size:10.1px;color:#333;">Review</div>
<div class="r" style="left:1208.2px;top:353px;width:4px;height:4px;background:#222;border-radius:50%;"></div>
<div class="t " style="left:1225.8px;top:350.4px;font-size:10.1px;color:#333;">Ticket assigned</div>
<div class="r" style="left:1208.2px;top:374.8px;width:4px;height:4px;background:#222;border-radius:50%;"></div>
<div class="t " style="left:1225.8px;top:372.2px;font-size:10.1px;color:#333;">Work in progress</div>
<div class="r" style="left:1208.2px;top:396.3px;width:4px;height:4px;background:#222;border-radius:50%;"></div>
<div class="t " style="left:1225.8px;top:393.7px;font-size:10.1px;color:#333;">User verification</div>
<div class="t " style="left:1195.9px;top:417.5px;font-size:13.4px;color:#5b8cc4;">Details</div>
<div class="t " style="left:1195.6px;top:444.5px;font-size:9.8px;color:#666;letter-spacing:-0.1px;">Created by:</div>
<div class="t " style="left:1204.1px;top:459.0px;font-size:9.8px;color:#333;">Grzegorz Stras</div>
<div class="t " style="left:1195.6px;top:477.5px;font-size:9.8px;color:#666;letter-spacing:-0.1px;">Created date:</div>
<div class="t " style="left:1204.1px;top:492.0px;font-size:9.8px;color:#333;">5/30/2019</div>
<div class="t " style="left:1195.6px;top:510.7px;font-size:9.8px;color:#666;letter-spacing:-0.1px;">Modified by:</div>
<div class="t " style="left:1204.1px;top:525.2px;font-size:9.8px;color:#333;">Grzegorz Stras</div>
<div class="t " style="left:1195.6px;top:544.4px;font-size:9.8px;color:#666;letter-spacing:-0.1px;">Modification date:</div>
<div class="t " style="left:1204.1px;top:558.9px;font-size:9.8px;color:#333;">5/30/2019</div>
<div class="t " style="left:1195.6px;top:577.3px;font-size:9.8px;color:#666;letter-spacing:-0.1px;">Version:</div>
<div class="t " style="left:1204.1px;top:591.8px;font-size:9.8px;color:#333;">1</div>
</body></html>
